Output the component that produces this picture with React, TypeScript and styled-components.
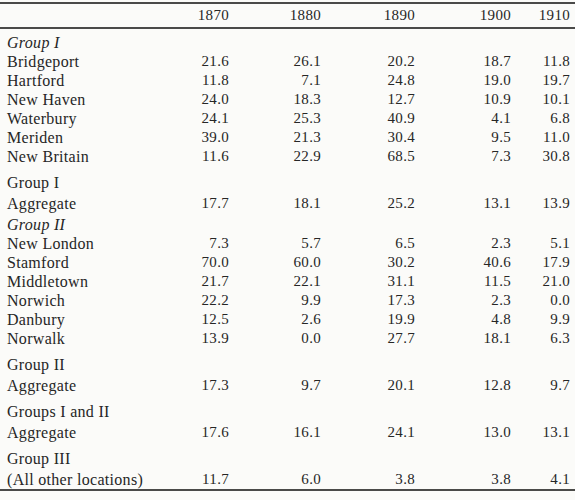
import styled, { createGlobalStyle } from "styled-components";

const GlobalStyle = createGlobalStyle`
  html, body {
    margin: 0;
    padding: 0;
    background: #fbfbf9;
  }
  body {
    font-family: "Liberation Serif", "Times New Roman", serif;
    color: #262626;
  }
`;

const COLS = "168px 61px 92px 94px 96px 59px";

const Table = styled.div`
  width: 575px;
  padding-top: 2px;
  font-size: 16px;
  letter-spacing: 0.3px;
  font-variant-numeric: oldstyle-nums;
`;

const Rule = styled.div`
  height: 2px;
  background: #2a2a2a;
  opacity: 0.85;
`;

const HeadRow = styled.div`
  display: grid;
  grid-template-columns: ${COLS};
  height: 23px;
  align-items: center;
`;

const Body = styled.div`
  padding: 4px 0 0;
`;

const Row = styled.div<{ $gap: number }>`
  display: grid;
  grid-template-columns: ${COLS};
  height: 19px;
  align-items: center;
  margin-top: ${({ $gap }) => $gap}px;
`;

const Label = styled.div<{ $italic?: boolean }>`
  padding-left: 7px;
  white-space: nowrap;
  font-style: ${({ $italic }) => ($italic ? "italic" : "normal")};
`;

const Num = styled.div`
  text-align: right;
  font-size: 15px;
`;

type Line = { label: string; italic?: boolean; gap?: number; v?: string[] };

const years = ["1870", "1880", "1890", "1900", "1910"];

const lines: Line[] = [
  { label: "Group I", italic: true },
  { label: "Bridgeport", v: ["21.6", "26.1", "20.2", "18.7", "11.8"] },
  { label: "Hartford", v: ["11.8", "7.1", "24.8", "19.0", "19.7"] },
  { label: "New Haven", v: ["24.0", "18.3", "12.7", "10.9", "10.1"] },
  { label: "Waterbury", v: ["24.1", "25.3", "40.9", "4.1", "6.8"] },
  { label: "Meriden", v: ["39.0", "21.3", "30.4", "9.5", "11.0"] },
  { label: "New Britain", v: ["11.6", "22.9", "68.5", "7.3", "30.8"] },
  { label: "Group I", gap: 7 },
  { label: "Aggregate", gap: 2, v: ["17.7", "18.1", "25.2", "13.1", "13.9"] },
  { label: "Group II", italic: true, gap: 2 },
  { label: "New London", v: ["7.3", "5.7", "6.5", "2.3", "5.1"] },
  { label: "Stamford", v: ["70.0", "60.0", "30.2", "40.6", "17.9"] },
  { label: "Middletown", v: ["21.7", "22.1", "31.1", "11.5", "21.0"] },
  { label: "Norwich", v: ["22.2", "9.9", "17.3", "2.3", "0.0"] },
  { label: "Danbury", v: ["12.5", "2.6", "19.9", "4.8", "9.9"] },
  { label: "Norwalk", v: ["13.9", "0.0", "27.7", "18.1", "6.3"] },
  { label: "Group II", gap: 7 },
  { label: "Aggregate", gap: 2, v: ["17.3", "9.7", "20.1", "12.8", "9.7"] },
  { label: "Groups I and II", gap: 7 },
  { label: "Aggregate", gap: 2, v: ["17.6", "16.1", "24.1", "13.0", "13.1"] },
  { label: "Group III", gap: 7 },
  { label: "(All other locations)", gap: 2, v: ["11.7", "6.0", "3.8", "3.8", "4.1"] },
];

export default function App() {
  return (
    <>
      <GlobalStyle />
      <Table>
        <Rule />
        <HeadRow>
          <Label />
          {years.map((y) => (
            <Num key={y}>{y}</Num>
          ))}
        </HeadRow>
        <Rule />
        <Body>
          {lines.map((l, i) => (
            <Row key={i} $gap={l.gap ?? 0}>
              <Label $italic={l.italic}>{l.label}</Label>
              {l.v?.map((n, j) => (
                <Num key={j}>{n}</Num>
              ))}
            </Row>
          ))}
        </Body>
        <Rule />
      </Table>
    </>
  );
}
